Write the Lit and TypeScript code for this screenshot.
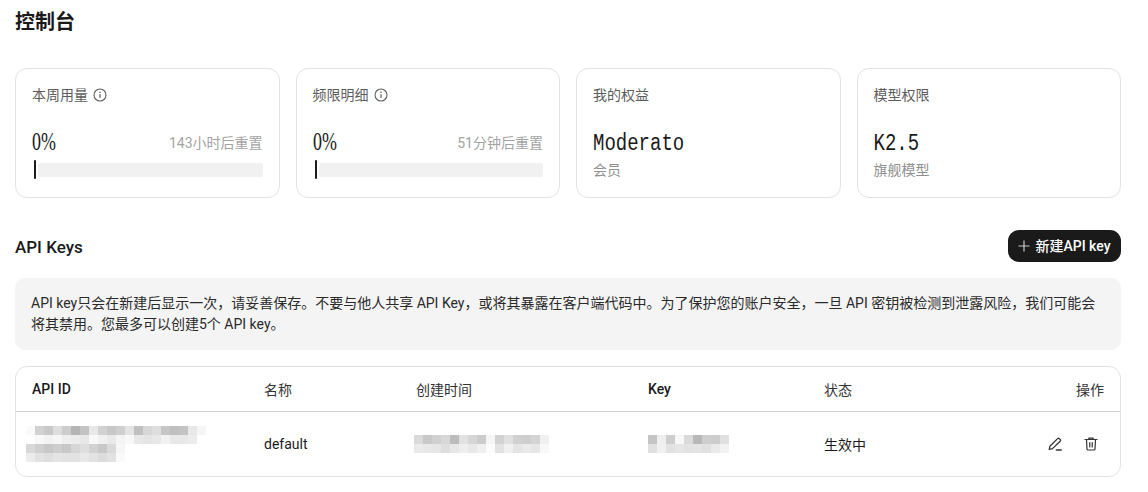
import { LitElement, html, css, unsafeCSS } from "lit";
import { customElement } from "lit/decorators.js";

const SANS = unsafeCSS(`Roboto,"Noto Sans CJK SC",sans-serif`);

const info = html`<svg class="info" viewBox="0 0 14 14" width="14" height="14" fill="none" stroke="#606060" stroke-width="1.1"><circle cx="7" cy="7" r="6"/><path d="M7 6.2v3.6" stroke-width="1.3"/><circle cx="7" cy="4.3" r=".8" fill="#606060" stroke="none"/></svg>`;

const mosaic = (rows: number[][], cell: number) => html`<div class="mosaic">
  ${rows.map(
    (r) => html`<div class="mrow">${r.map(
      (v) => html`<i style="width:${cell}px;height:${cell}px;background:rgb(${v},${v},${v})"></i>`
    )}</div>`
  )}
</div>`;

const idBlur = [
  [250,210,200,222,205,180,195,232,210,200,208,228,192,215,222,198,192,196,232,245],
  [254,248,242,246,238,236,232,248,240,234,244,248,232,228,232,242,232,232,236,255],
  [216,208,200,206,200,214,222,210,200,218,246,255,255,255,255,255,255,255,255,255],
  [236,226,222,228,226,226,232,226,220,226,250,255,255,255,255,255,255,255,255,255],
];
const timeBlur = [
  [218,200,208,216,188,226,214,204,246,210,224,208,206,212,240],
  [234,232,230,222,232,238,232,240,252,226,240,228,234,230,248],
];
const keyBlur = [
  [196,238,206,248,218,184,206,204,224],
  [224,240,226,230,226,228,224,234,242],
];

@customElement("app-root")
export class AppRoot extends LitElement {
  static styles = css`
    :host { display: block; width: 1148px; height: 492px; overflow: hidden; background: #fff; font-family: ${SANS}; color: #1a1a1a; }
    .page { padding: 0 27px 0 15px; }
    h1 { margin: 0; padding-top: 8px; height: 68px; box-sizing: border-box; font-size: 20px; line-height: 28px; font-weight: 700; }
    .cards { display: grid; grid-template-columns: repeat(4, 1fr); gap: 16px; }
    .card { height: 130px; box-sizing: border-box; border: 1px solid #e2e2e2; border-radius: 12px; padding: 16px 16px 0; display: flex; flex-direction: column; }
    .label { height: 20px; display: flex; align-items: center; gap: 5px; font-size: 14px; line-height: 20px; color: #5c5c5c; }
    .value-row { margin-top: 24px; height: 26px; display: flex; justify-content: space-between; align-items: center; }
    .pct { font-family: "Liberation Serif", serif; font-size: 26px; line-height: 26px; display: inline-block; transform: scaleX(.69); transform-origin: left center; color: #1a1a1a; }
    .reset { font-size: 14px; color: #a3a3a3; line-height: 20px; margin-top: 2px; }
    .bar { position: relative; margin-top: 8px; height: 14px; margin-left: 6px; background: #f1f1f1; border-radius: 2px; }
    .bar::before { content: ""; position: absolute; left: -4px; top: -3px; width: 2px; height: 19px; background: #1a1a1a; border-radius: 1px; }
    .plan { margin-top: 26px; height: 26px; }
    .plan span { display: inline-block; font-family: "Liberation Mono", monospace; font-size: 19px; line-height: 26px; transform: scaleY(1.28); transform-origin: center; }
    .sub { margin-top: 3px; font-size: 14px; line-height: 20px; color: #8f8f8f; }
    .head { margin-top: 32px; height: 32px; display: flex; justify-content: space-between; align-items: center; }
    h2 { margin: 2px 0 0; font-size: 17px; font-weight: 500; line-height: 30px; }
    .new { border: 0; height: 32px; width: 113px; box-sizing: border-box; border-radius: 11px; background: #1a1a1a; color: #fff; font: 500 14px/32px ${SANS}; display: flex; align-items: center; justify-content: center; gap: 5px; padding: 0; white-space: nowrap; }
    .notice { margin-top: 16px; height: 72px; box-sizing: border-box; background: #f4f4f4; border-radius: 10px; padding: 15px 16px; font-size: 14px; line-height: 21px; color: #2a2a2a; }
    .table { margin-top: 16px; height: 111px; box-sizing: border-box; border: 1px solid #e2e2e2; border-radius: 12px; display: flex; flex-direction: column; }
    .tr { display: grid; grid-template-columns: 232px 152px 232px 176px 1fr 100px; padding: 0 16px; align-items: center; font-size: 14px; }
    .th { height: 44px; border-bottom: 1px solid #cfcfcf; color: #333; }
    .th .b { font-weight: 500; color: #1a1a1a; }
    .td { flex: 1; }
    .right { text-align: right; }
    .actions { display: flex; justify-content: flex-end; gap: 21px; align-items: center; margin-right: 6px; }
    .mosaic { display: flex; flex-direction: column; }
    .mrow { display: flex; }
    .mrow i { display: block; flex: none; }
    .cid { margin-left: -6px; }
    .ctime { margin-left: -2px; }
  `;

  render() {
    return html`<div class="page">
      <h1>控制台</h1>
      <div class="cards">
        <div class="card">
          <div class="label">本周用量 ${info}</div>
          <div class="value-row"><span class="pct">0%</span><span class="reset">143小时后重置</span></div>
          <div class="bar"></div>
        </div>
        <div class="card">
          <div class="label">频限明细 ${info}</div>
          <div class="value-row"><span class="pct">0%</span><span class="reset">51分钟后重置</span></div>
          <div class="bar"></div>
        </div>
        <div class="card">
          <div class="label">我的权益</div>
          <div class="plan"><span>Moderato</span></div>
          <div class="sub">会员</div>
        </div>
        <div class="card">
          <div class="label">模型权限</div>
          <div class="plan"><span>K2.5</span></div>
          <div class="sub">旗舰模型</div>
        </div>
      </div>
      <div class="head">
        <h2>API Keys</h2>
        <button class="new">
          <svg width="12" height="12" viewBox="0 0 12 12" fill="none" stroke="#c8c8c8" stroke-width="1.2"><path d="M6 .5v11M.5 6h11"/></svg>
          <span>新建API key</span>
        </button>
      </div>
      <div class="notice">API key只会在新建后显示一次，请妥善保存。不要与他人共享 API Key，或将其暴露在客户端代码中。为了保护您的账户安全，一旦 API 密钥被检测到泄露风险，我们可能会<br />将其禁用。您最多可以创建5个 API key。</div>
      <div class="table">
        <div class="tr th">
          <span class="b">API ID</span><span>名称</span><span>创建时间</span><span class="b">Key</span><span>状态</span><span class="right">操作</span>
        </div>
        <div class="tr td">
          <div class="cid">${mosaic(idBlur, 9)}</div>
          <span>default</span>
          <div class="ctime">${mosaic(timeBlur, 9)}</div>
          <div>${mosaic(keyBlur, 9)}</div>
          <span>生效中</span>
          <div class="actions">
            <svg width="16" height="16" viewBox="0 0 16 16" fill="none" stroke="#333" stroke-width="1.3" stroke-linejoin="round" stroke-linecap="round"><path d="M2.2 13.3l.7-3L10.6 2.6a1.2 1.2 0 0 1 1.700 0l.9.9a1.200 1.200 0 0 1 0 1.700L5.500 12.600z"/><path d="M9.300 14h5"/></svg>
            <svg width="14" height="16" viewBox="0 0 14 16" fill="none" stroke="#333" stroke-width="1.2" stroke-linecap="round" stroke-linejoin="round"><path d="M1 3.500h12M4.800 3.300V2.200h4.400v1.100M2.500 3.800l.5 9.200a1 1 0 0 0 1 1h6a1 1 0 0 0 1-1l.5-9.200M5.800 6.500v4.500M8.200 6.500v4.500"/></svg>
          </div>
        </div>
      </div>
    </div>`;
  }
}
